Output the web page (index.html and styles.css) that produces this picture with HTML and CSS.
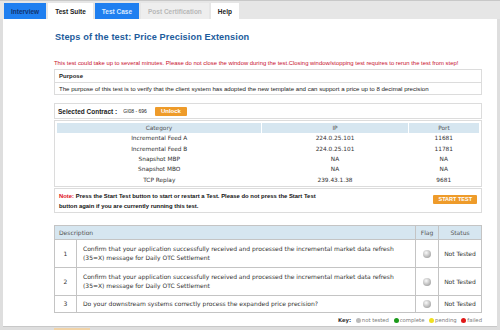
FILE: index.html
```html
<!DOCTYPE html>
<html lang="en">
<head>
    <meta charset="UTF-8">
    <title>Test Case</title>
    <link rel="stylesheet" href="styles.css">
</head>
<body>
    <div class="tabs">
        <span class="tab tab-blue tab-dark">Interview</span>
        <span class="tab">Test Suite</span>
        <span class="tab tab-blue">Test Case</span>
        <span class="tab tab-off">Post Certification</span>
        <span class="tab">Help</span>
    </div>
    <div class="page">
        <h1>Steps of the test: Price Precision Extension</h1>
        <p class="warning">This test could take up to several minutes. Please do not close the window during the test.Closing window/stopping test requires to rerun the test from step!</p>

        <div class="box purpose">
            <div class="purpose-head">Purpose</div>
            <div class="purpose-text">The purpose of this test is to verify that the client system has adopted the new template and can support a price up to 8 decimal precision</div>
        </div>

        <div class="box contract">
            <b>Selected Contract :</b>
            <span class="contract-id">GI08 - 696</span>
            <button class="btn-orange">Unlock</button>
        </div>

        <div class="box feeds">
            <table class="feed-table">
                <tr><th>Category</th><th>IP</th><th>Port</th></tr>
                <tr><td>Incremental Feed A</td><td>224.0.25.101</td><td>11681</td></tr>
                <tr><td>Incremental Feed B</td><td>224.0.25.101</td><td>11781</td></tr>
                <tr><td>Snapshot MBP</td><td>NA</td><td>NA</td></tr>
                <tr><td>Snapshot MBO</td><td>NA</td><td>NA</td></tr>
                <tr><td>TCP Replay</td><td>239.43.1.38</td><td>9681</td></tr>
            </table>
        </div>

        <div class="box note">
            <p><span class="note-label">Note:</span> Press the Start Test button to start or restart a Test. Please do not press the Start Test<br>button again if you are currently running this test.</p>
            <button class="btn-orange btn-start">START TEST</button>
        </div>

        <table class="steps">
            <tr><th colspan="2" class="desc-head">Description</th><th>Flag</th><th>Status</th></tr>
            <tr class="tall">
                <td class="num">1</td>
                <td class="desc">Confirm that your application successfully received and processed the incremental market data refresh (35=X) message for Daily OTC Settlement</td>
                <td class="flag"><span class="dot"></span></td>
                <td class="status">Not Tested</td>
            </tr>
            <tr class="tall">
                <td class="num">2</td>
                <td class="desc">Confirm that your application successfully received and processed the incremental market data refresh (35=X) message for Daily OTC Settlement</td>
                <td class="flag"><span class="dot"></span></td>
                <td class="status">Not Tested</td>
            </tr>
            <tr>
                <td class="num">3</td>
                <td class="desc">Do your downstream systems correctly process the expanded price precision?</td>
                <td class="flag"><span class="dot"></span></td>
                <td class="status">Not Tested</td>
            </tr>
        </table>

        <div class="key">
            <b>Key:</b>
            <span class="key-dot gray"></span>not tested
            <span class="key-dot green"></span>complete
            <span class="key-dot yellow"></span>pending
            <span class="key-dot red"></span>failed
        </div>
    </div>
    <div class="bottom-btn"></div>
</body>
</html>
```

FILE: styles.css
```css
body {
    margin: 0;
    background: #dedede;
    font-family: "Liberation Sans", Arial, sans-serif;
    font-size: 6px;
    color: #222;
    height: 330px;
    overflow: hidden;
}

.tabs {
    display: flex;
    gap: 2px;
    height: 16px;
    padding: 2px 4px 0;
    background: #e6e6e6;
    border-top: 1px solid #c8c8c8;
}

.tab {
    display: flex;
    align-items: center;
    padding: 0 7px;
    height: 16px;
    background: #fff;
    font-weight: bold;
    font-size: 6.5px;
    color: #222;
}

.tab-blue {
    background: #1f7ff0;
    color: #d8e8ff;
}

.tab-dark {
    color: #13346e;
}

.tab-off {
    background: #eee;
    color: #b8b8b8;
}

.page {
    background: #fff;
    margin: 0 3px;
    height: 307px;
    padding: 0 15px 0 51px;
    overflow: hidden;
    border-bottom: 1px solid #c8c8c8;
}

h1 {
    margin: 12px 0 0 1px;
    font-size: 9.2px;
    line-height: 12px;
    color: #1d5c9c;
    letter-spacing: 0.1px;
}

.warning {
    margin: 17px 0 0;
    color: #c8102e;
    font-size: 5.9px;
    line-height: 7px;
    white-space: nowrap;
}

.box {
    border: 1px solid #dcdcdc;
}

.purpose {
    margin-top: 2px;
}

.purpose-head {
    font-weight: bold;
    height: 12px;
    line-height: 12px;
    padding: 0 4px;
    border-bottom: 1px solid #dcdcdc;
}

.purpose-text {
    height: 11px;
    line-height: 11px;
    padding: 0 4px;
    font-size: 6.1px;
}

.contract {
    margin-top: 8px;
    display: flex;
    align-items: center;
    height: 14px;
    padding-left: 3px;
    font-size: 6.5px;
}

.contract-id {
    font-size: 5px;
    margin: 0 8px 0 6px;
}

.btn-orange {
    border: none;
    background: #ee9b2a;
    color: #fff;
    font-family: "Liberation Sans", Arial, sans-serif;
    font-weight: bold;
    font-size: 6px;
    line-height: 7px;
    padding: 1px 6px;
    border-radius: 1px;
}

.feeds {
    margin-top: 1px;
    padding: 2px 2px 1px;
}

.feed-table {
    width: 100%;
    border-collapse: collapse;
    font-family: "DejaVu Sans", sans-serif;
    font-size: 5.8px;
    line-height: 10px;
    color: #333;
}

.feed-table th {
    background: #d6e6f0;
    font-weight: normal;
    color: #555;
    height: 10px;
    padding: 0;
    border-left: 1px solid #fff;
}

.feed-table th:first-child {
    border-left: none;
}

.feed-table td {
    text-align: center;
    height: 10.4px;
    padding: 0;
}

.feed-table th:nth-child(1) { width: 204px; }
.feed-table th:nth-child(2) { width: 146px; }

.note {
    margin-top: 1px;
    display: flex;
    align-items: flex-start;
    justify-content: space-between;
    padding: 2px 4px 1px 4px;
}

.note p {
    margin: 0;
    font-weight: bold;
    line-height: 10px;
    font-size: 5.9px;
    color: #111;
}

.note-label {
    color: #e0101a;
}

.btn-start {
    margin-top: 4px;
    font-size: 5.5px;
    padding: 1px 5px;
}

.steps {
    margin-top: 12px;
    width: 100%;
    border-collapse: collapse;
    font-family: "DejaVu Sans", sans-serif;
    font-size: 6px;
    color: #333;
}

.steps th, .steps td {
    border: 1px solid #c4c4c4;
    padding: 0;
}

.steps th {
    background: #d6e6f0;
    font-weight: normal;
    color: #555;
    height: 13px;
}

.steps .desc-head {
    text-align: left;
    padding-left: 4px;
}

.steps td {
    height: 16px;
}

.steps tr.tall td {
    height: 27px;
}

.num {
    width: 21px;
    text-align: center;
}

.desc {
    padding: 0 14px 0 6px !important;
    line-height: 9px;
}

.flag {
    width: 22px;
    text-align: center;
}

.status {
    width: 42px;
    text-align: center;
}

.dot {
    display: inline-block;
    width: 8px;
    height: 8px;
    border-radius: 50%;
    background: radial-gradient(circle at 40% 35%, #fafafa, #b8b8b8 60%, #8a8a8a);
    vertical-align: middle;
}

.key {
    margin-top: 3px;
    text-align: right;
    font-family: "DejaVu Sans", sans-serif;
    font-size: 5.3px;
    line-height: 8px;
    color: #777;
}

.key b {
    color: #333;
}

.key-dot {
    display: inline-block;
    width: 5px;
    height: 5px;
    border-radius: 50%;
    margin: 0 1px 0 3px;
    vertical-align: -1px;
}

.key-dot.gray { background: #bbb; }
.key-dot.green { background: #1a9a1a; }
.key-dot.yellow { background: #f0e020; }
.key-dot.red { background: #e01818; }

.bottom-btn {
    margin: 1px 0 0 54px;
    width: 36px;
    height: 3px;
    background: #f1d3a7;
}
```
